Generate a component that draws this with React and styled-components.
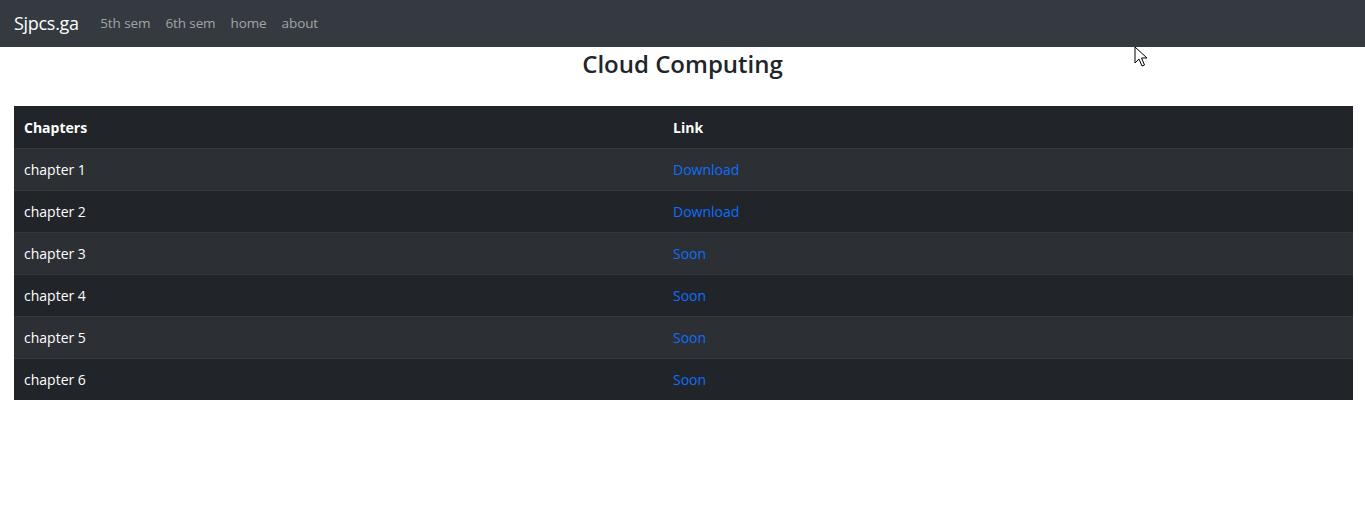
import React from "react";
import styled, { createGlobalStyle } from "styled-components";

const rows = [
  { name: "chapter 1", link: "Download" },
  { name: "chapter 2", link: "Download" },
  { name: "chapter 3", link: "Soon" },
  { name: "chapter 4", link: "Soon" },
  { name: "chapter 5", link: "Soon" },
  { name: "chapter 6", link: "Soon" },
];

const Global = createGlobalStyle`
  body {
    margin: 0;
    background: #fff;
    font-family: "Open Sans", "Noto Sans", sans-serif;
    color: #212529;
  }
`;

export default function App() {
  return (
    <Page>
      <Global />
      <NavBar>
        <Brand href="#">Sjpcs.ga</Brand>
        <NavLinks>
          <NavLink href="#">5th sem</NavLink>
          <NavLink href="#">6th sem</NavLink>
          <NavLink href="#">home</NavLink>
          <NavLink href="#">about</NavLink>
        </NavLinks>
      </NavBar>
      <Title>Cloud Computing</Title>
      <TableWrap>
        <Table>
          <thead>
            <tr>
              <Th style={{ width: "649px" }}>Chapters</Th>
              <Th>Link</Th>
            </tr>
          </thead>
          <tbody>
            {rows.map((r, i) => (
              <Row key={r.name} $striped={i % 2 === 0}>
                <Td>{r.name}</Td>
                <Td>
                  <Link href="#">{r.link}</Link>
                </Td>
              </Row>
            ))}
          </tbody>
        </Table>
      </TableWrap>
      <Cursor width="14" height="22" viewBox="0 0 14 22">
        <path d="M1 1 L1 17 L5 13 L8 20 L10.5 19 L7.5 12 L13 12 Z" fill="#fff" stroke="#000" strokeWidth="1" strokeLinejoin="round" />
      </Cursor>
    </Page>
  );
}

const Page = styled.div`
  position: relative;
  min-height: 512px;
`;

const NavBar = styled.nav`
  height: 47px;
  background: #343a40;
  display: flex;
  align-items: center;
  padding: 0 14px 2px;
  box-sizing: border-box;
`;

const Brand = styled.a`
  color: #fff;
  font-size: 18px;
  text-decoration: none;
  margin-right: 14px;
  letter-spacing: -0.3px;
`;

const NavLinks = styled.div`
  display: flex;
`;

const NavLink = styled.a`
  color: rgba(255, 255, 255, 0.55);
  font-size: 13.5px;
  text-decoration: none;
  padding: 0 7.5px;
  letter-spacing: -0.1px;
`;

const Title = styled.h3`
  margin: 0;
  height: 59px;
  box-sizing: border-box;
  padding-top: 2px;
  text-align: center;
  font-size: 24px;
  line-height: 29px;
  font-weight: 600;
  color: #212529;
`;

const TableWrap = styled.div`
  padding: 0 12px 0 14px;
`;

const Table = styled.table`
  width: 100%;
  border-collapse: collapse;
  background: #212529;
  color: #fff;
  font-size: 14px;
`;

const Th = styled.th`
  text-align: left;
  font-weight: 700;
  padding: 2px 10px 0;
  height: 42px;
  box-sizing: border-box;
`;

const Row = styled.tr`
  background: ${(p) => (p.$striped ? "#2c3034" : "#212529")};
  border-top: 1px solid #32383e;
`;

const Td = styled.td`
  padding: 0 10px;
  height: 42px;
  box-sizing: border-box;
`;

const Link = styled.a`
  color: #0d6efd;
  text-decoration: none;
`;

const Cursor = styled.svg`
  position: absolute;
  left: 1134px;
  top: 46px;
`;
